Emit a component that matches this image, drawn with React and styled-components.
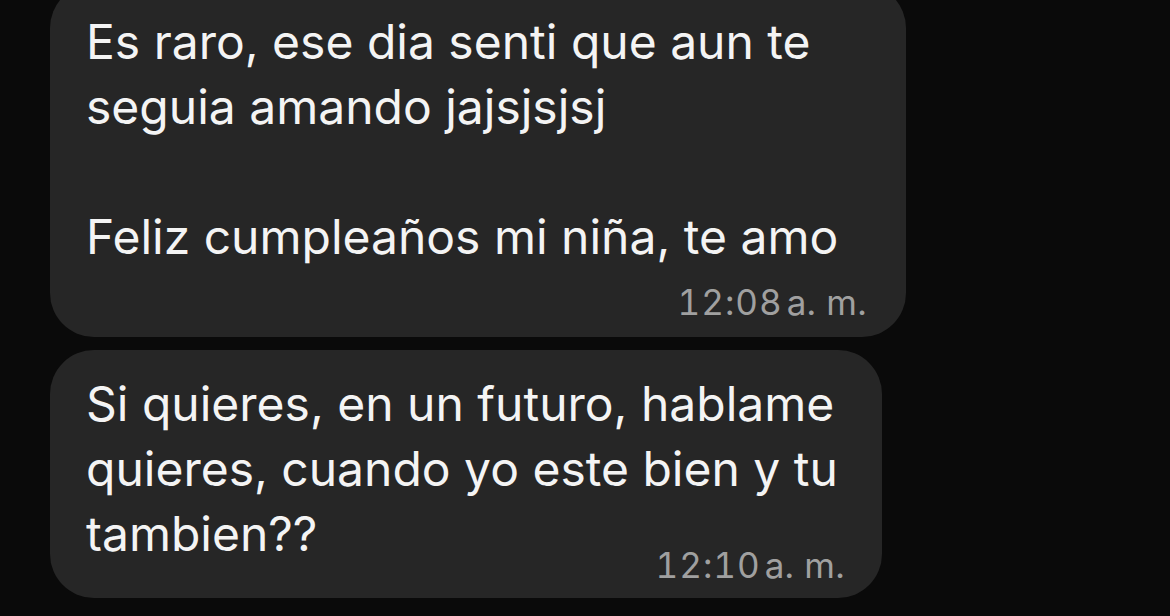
import React from "react";
import styled, { createGlobalStyle } from "styled-components";

const Global = createGlobalStyle`
  html, body { margin: 0; padding: 0; background: #0a0a0a; }
  body { width: 1170px; height: 616px; overflow: hidden; }
`;

const Thread = styled.div`
  display: flex;
  flex-direction: column;
  align-items: flex-start;
  gap: 13px;
  padding-left: 50px;
  margin-top: -16px;
  font-family: Inter, "Noto Sans", sans-serif;
`;

const Bubble = styled.div`
  box-sizing: border-box;
  width: ${(p) => p.$w}px;
  background: #262626;
  border-radius: 44px;
  padding: ${(p) => p.$pt}px 36px ${(p) => p.$pb}px 36px;
  display: flex;
  flex-direction: column;
`;

const Text = styled.div`
  color: #f4f4f4;
  font-size: 48px;
  line-height: 65px;
  white-space: pre-line;
`;

const Meta = styled.div`
  align-self: flex-end;
  margin-top: ${(p) => p.$mt}px;
  margin-right: ${(p) => p.$mr}px;
  color: #a0a0a0;
  font-size: 35px;
  line-height: 40px;
  display: flex;
  gap: 4px;
`;

const Time = styled.span`
  font-variant-numeric: tabular-nums;
  letter-spacing: 1px;
`;

export default function App() {
  return (
    <>
      <Global />
      <Thread>
        <Bubble $w={856} $pt={25} $pb={15}>
          <Text>{"Es raro, ese dia senti que aun te\nseguia amando jajsjsjsj\n\nFeliz cumpleaños mi niña, te amo"}</Text>
          <Meta $mt={13} $mr={3}>
            <Time>12:08</Time>
            <span>a. m.</span>
          </Meta>
        </Bubble>
        <Bubble $w={832} $pt={21} $pb={13}>
          <Text>{"Si quieres, en un futuro, hablame\nquieres, cuando yo este bien y tu\ntambien??"}</Text>
          <Meta $mt={-21} $mr={1}>
            <Time>12:10</Time>
            <span>a. m.</span>
          </Meta>
        </Bubble>
      </Thread>
    </>
  );
}
